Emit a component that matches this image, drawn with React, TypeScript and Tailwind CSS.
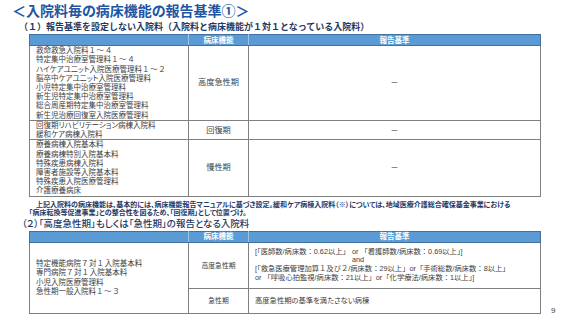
import React from "react";

const F = {
  fontFamily: '"Liberation Sans", "Noto Sans CJK JP", sans-serif',
};

function T({ t }: { t: string }) {
  const parts = t.split(/([０-９～]+)/);
  return (
    <>
      {parts.map((p, i) =>
        /^[０-９～]+$/.test(p) ? (
          <span key={i} className="[font-feature-settings:normal] tracking-[0.6px]">
            {p}
          </span>
        ) : (
          <React.Fragment key={i}>{p}</React.Fragment>
        )
      )}
    </>
  );
}

export default function App() {
  const row1 = [
    "救命救急入院料１～４",
    "特定集中治療室管理料１～４",
    "ハイケアユニット入院医療管理料１～２",
    "脳卒中ケアユニット入院医療管理料",
    "小児特定集中治療室管理料",
    "新生児特定集中治療室管理料",
    "総合周産期特定集中治療室管理料",
    "新生児治療回復室入院医療管理料",
  ];
  const row2 = ["回復期リハビリテーション病棟入院料", "緩和ケア病棟入院料"];
  const row3 = [
    "療養病棟入院基本料",
    "療養病棟特別入院基本料",
    "特殊疾患病棟入院料",
    "障害者施設等入院基本料",
    "特殊疾患入院医療管理料",
    "介護療養病床",
  ];
  const left2 = [
    "特定機能病院７対１入院基本料",
    "専門病院７対１入院基本料",
    "小児入院医療管理料",
    "急性期一般入院料１～３",
  ];
  const cell = "border border-[#7f7f7f] align-middle";
  return (
    <div
      className="w-[569px] h-[320px] bg-white overflow-hidden text-[#404040] [font-feature-settings:'palt']"
      style={F}
    >
      <div className="pl-[12px] pt-[3px] h-[20px] text-[14px] leading-[17px] font-bold text-[#1f56a3]">
        ＜入院料毎の病床機能の報告基準①＞
      </div>
      <div className="pl-[19px] h-[14px] text-[9px] leading-[14px] font-bold text-[#1f3864] [font-feature-settings:normal]">
        （１）報告基準を設定しない入院料（入院料と病床機能が１対１となっている入院料）
      </div>
      <div className="pl-[29px]">
        <table className="w-[512px] border-collapse table-fixed">
          <colgroup>
            <col className="w-[159px]" />
            <col className="w-[60px]" />
            <col />
          </colgroup>
          <thead>
            <tr className="h-[11px] bg-[#5b9bd5] text-white text-[7.5px] leading-[9px] font-bold">
              <th className="border border-[#41719c] border-r-[#9dc3e6]"></th>
              <th className="border border-[#41719c] border-x-[#9dc3e6] text-center">病床機能</th>
              <th className="border border-[#41719c] border-l-[#9dc3e6] text-center">報告基準</th>
            </tr>
          </thead>
          <tbody className="text-[7.5px] leading-[9.2px]">
            <tr className="h-[75px]">
              <td className={`${cell} pl-[6px]`}>
                {row1.map((t) => (
                  <div key={t}>
                    <T t={t} />
                  </div>
                ))}
              </td>
              <td className={`${cell} text-center text-[8.2px]`}>高度急性期</td>
              <td className={`${cell} text-center text-[8px]`}>－</td>
            </tr>
            <tr className="h-[19px]">
              <td className={`${cell} pl-[6px] border-t-[#595959]`}>
                {row2.map((t) => (
                  <div key={t}>{t}</div>
                ))}
              </td>
              <td className={`${cell} text-center text-[8.2px] border-t-[#595959]`}>回復期</td>
              <td className={`${cell} text-center text-[8px] border-t-[#595959]`}>－</td>
            </tr>
            <tr className="h-[54px]">
              <td className={`${cell} pl-[6px]`}>
                {row3.map((t) => (
                  <div key={t}>{t}</div>
                ))}
              </td>
              <td className={`${cell} text-center text-[8.2px]`}>慢性期</td>
              <td className={`${cell} text-center text-[8px]`}>－</td>
            </tr>
          </tbody>
        </table>
      </div>
      <div className="pl-[29px] pt-[4px] text-[7px] leading-[8.5px] font-bold text-[#1f3864]">
        <div>　上記入院料の病床機能は、基本的には、病床機能報告マニュアルに基づき設定。緩和ケア病棟入院料（※）については、地域医療介護総合確保基金事業における</div>
        <div>「病床転換等促進事業」との整合性を図るため、「回復期」として位置づけ。</div>
      </div>
      <div className="pl-[22px] h-[12px] text-[9.5px] leading-[12px] font-medium text-[#1f3864]">
        （２）「高度急性期」もしくは「急性期」の報告となる入院料
      </div>
      <div className="pl-[29px] pt-[1px] flex items-end">
        <table className="w-[512px] border-collapse table-fixed">
          <colgroup>
            <col className="w-[159px]" />
            <col className="w-[60px]" />
            <col />
          </colgroup>
          <thead>
            <tr className="h-[11px] bg-[#5b9bd5] text-white text-[7.5px] leading-[9px] font-bold">
              <th className="border border-[#41719c] border-r-[#9dc3e6]"></th>
              <th className="border border-[#41719c] border-x-[#9dc3e6] text-center">病床機能</th>
              <th className="border border-[#41719c] border-l-[#9dc3e6] text-center">報告基準</th>
            </tr>
          </thead>
          <tbody className="text-[7.5px] leading-[9.2px]">
            <tr className="h-[46px]">
              <td rowSpan={2} className={`${cell} pl-[6px]`}>
                {left2.map((t) => (
                  <div key={t}>
                    <T t={t} />
                  </div>
                ))}
              </td>
              <td className={`${cell} text-center text-[6.8px]`}>高度急性期</td>
              <td className={`${cell} pl-[6px] text-[7.3px] leading-[8.8px] [font-feature-settings:normal]`}>
                <div>[「医師数/病床数：0.62以上」 or 「看護師数/病床数：0.69以上」]</div>
                <div className="pl-[97px]">and</div>
                <div>[「救急医療管理加算１及び２/病床数：29以上」or「手術総数/病床数：8以上」</div>
                <div>or 「呼吸心拍監視/病床数：21以上」or「化学療法/病床数：1以上」]</div>
              </td>
            </tr>
            <tr className="h-[25px]">
              <td className={`${cell} text-center text-[6.8px]`}>急性期</td>
              <td className={`${cell} pl-[6px] text-[7.3px]`}>高度急性期の基準を満たさない病棟</td>
            </tr>
          </tbody>
        </table>
        <div className="ml-[10px] mb-[-2px] text-[8px] leading-[10px] text-[#404040]">9</div>
      </div>
    </div>
  );
}
